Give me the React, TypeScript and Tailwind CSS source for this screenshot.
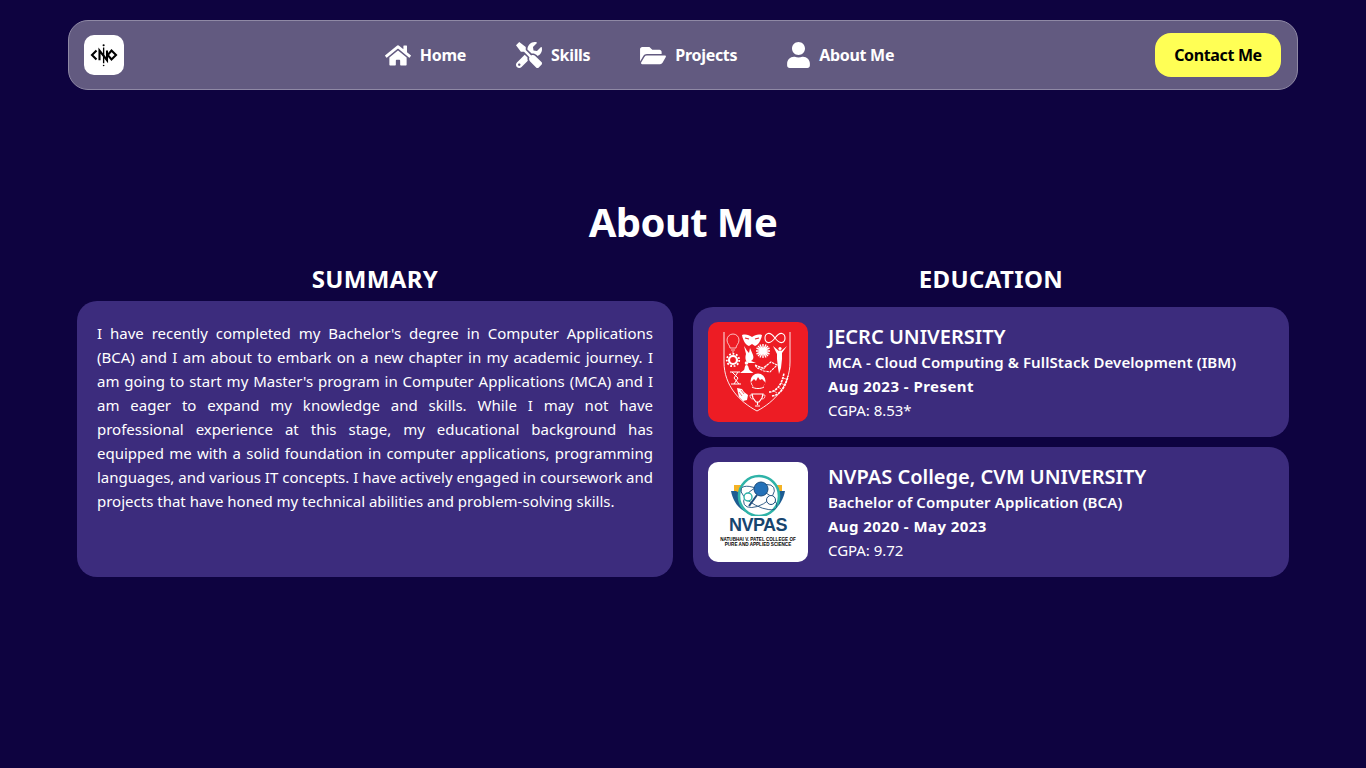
import React from "react";
import { FaFolderOpen, FaHome, FaTools, FaUser } from "react-icons/fa";

const navLinks = [
  { label: "Home", icon: FaHome, iconClass: "w-[26px] h-[23px]" },
  { label: "Skills", icon: FaTools, iconClass: "w-[26px] h-[26px]" },
  { label: "Projects", icon: FaFolderOpen, iconClass: "w-[26px] h-[23px]" },
  { label: "About Me", icon: FaUser, iconClass: "w-[23px] h-[26px]" },
];

const LogoMark = () => (
  <svg viewBox="0 0 40 40" className="w-[30px] h-[30px]">
    <g fill="none" stroke="#000" strokeWidth="2.8">
      <path d="M10 14l-6 6 6 6" />
      <path d="M14 27V14l10 13V14" />
      <path d="M30 14l6 6-6 6-5-6z" />
    </g>
    <circle cx="19.5" cy="7" r="1.4" fill="#000" />
    <path d="M19.5 10v21" stroke="#000" strokeWidth="1.8" />
    <circle cx="19.5" cy="34" r="1.1" fill="#000" />
  </svg>
);

const JecrcLogo = () => (
  <div className="w-[100px] h-[100px] shrink-0 rounded-[10px] bg-[#ed1c24]">
    <svg viewBox="0 0 100 100" className="w-full h-full" fill="none" stroke="#fff" strokeWidth="0.7">
      {/* shield */}
      <path d="M16 10v30c0 24 16 40 33 49 17-9 33-25 33-49V10" strokeWidth="0.9" />
      {/* bulb */}
      <path d="M22 26c0-3-3-4-3-8a6 6 0 0 1 12 0c0 4-3 5-3 8z" />
      <path d="M23 28h4M24 30h2" />
      {/* mask */}
      <path d="M34 13c4-1 7 0 10 2 3-2 6-3 10-2-1 6-4 10-7 11l-3-2-3 2c-3-1-6-5-7-11z" fill="#fff" stroke="none" />
      <path d="M37 16l4 1M47 17l4-1" stroke="#ed1c24" strokeWidth="1.2" />
      {/* infinity */}
      <path
        d="M67 16c-3-4-5-5-7-4.500-2 .5-3 2.500-3 4.500s1 4 3 4.500c2 .5 4-.5 7-4.500s5-5 7-4.500c2 .5 3 2.500 3 4.500s-1 4-3 4.500c-2 .5-4-.5-7-4.500z"
        strokeWidth="1.1"
      />
      {/* dove */}
      <path d="M36 24c2 3 3 5 5 7l1-5 3 7c1 3 0 5-2 6l5 2-7 0c-4-1-4-6-3-9z" fill="#fff" stroke="none" />
      {/* flower */}
      <g strokeWidth="1.4">
        <path d="M55 22v14M48 29h14M50 24l10 10M60 24L50 34M52 22.500l6 13M58 22.500l-6 13M48.500 26l13 6M61.500 26l-13 6" />
      </g>
      {/* gymnast */}
      <path d="M65 24l6 5 1-1 1 1 6-5-5 7v6l-1 9-2 6-1-6-1-9v-5z" fill="#fff" stroke="none" />
      <circle cx="72" cy="26.500" r="1.600" fill="#fff" stroke="none" />
      {/* gear */}
      <circle cx="25" cy="38" r="4" strokeWidth="2.200" />
      <circle cx="25" cy="38" r="6.200" strokeDasharray="1.800 1.700" strokeWidth="1.800" />
      {/* meditator */}
      <circle cx="38.500" cy="41" r="1.800" fill="#fff" stroke="none" />
      <path d="M38.500 43c2 0 2 3 3 5l4 3H32l4-3c1-2 .5-5 2.500-5z" fill="#fff" stroke="none" />
      {/* book */}
      <path d="M47 43l8 3 8-6 6 3-7 7-6-1-7-3z" strokeWidth="1.100" strokeDasharray="2.500 .8" />
      <path d="M50 45l6 2M59 43l-3 4" />
      {/* hourglass */}
      <path d="M22 50h10M23 62h10M24 50l6 6-4 6M30 50l-4 6 5 6" strokeWidth="1" />
      {/* globe */}
      <circle cx="50" cy="59" r="7.500" fill="#fff" stroke="none" />
      <path d="M43 60l3-3 2 2 2-4 2 3 2-1 3 3v2l-3 4h-8z" fill="#ed1c24" stroke="none" />
      <path d="M44 65c3 2 9 2 12 0" stroke="#fff" strokeWidth="1" />
      {/* dna */}
      <path d="M61 70c7 0 13-7 15-19M64 74c8-1 13-8 16-20" strokeWidth="1.600" strokeDasharray="2.500 .8" />
      <path d="M66 69l3 2M70 65l3 2M73 61l3 2M75 56l3 1" />
      {/* hand */}
      <path d="M29 66l5 1 2 3 4 3-1 5-4 1-4-4-1-4z" fill="#fff" stroke="none" />
      <path d="M31 70l3 4M33 68l3 4" stroke="#ed1c24" strokeWidth=".6" />
      {/* trophy */}
      <path d="M44 72h11l-1 4-3 4h-3l-3-4z" strokeWidth="1.200" />
      <path d="M44 73h-2c0 3 1 4 3 4M55 73h2c0 3-1 4-3 4" />
      <path d="M49.500 80v3M47 84h5" strokeWidth="1.200" />
    </svg>
  </div>
);

const NvpasLogo = () => (
  <div className="w-[100px] h-[100px] shrink-0 rounded-[10px] bg-white flex flex-col items-center">
    <svg viewBox="0 0 100 54" className="w-[100px] h-[54px] shrink-0">
      <path d="M26 23h7l-1 8-3 2-3-4z" fill="#f5b324" />
      <path d="M74 23h-7l1 8 3 2 3-4z" fill="#f5b324" />
      <path d="M23 29c2 10 7 18 17 22l-8-20-4-2z" fill="#1d5c92" />
      <path d="M77 29c-2 10-7 18-17 22l8-20 4-2z" fill="#1d5c92" />
      <circle cx="51" cy="34" r="20" fill="#fff" stroke="#2fb3a8" strokeWidth="2.600" />
      <ellipse cx="51" cy="36" rx="20" ry="8" transform="rotate(28 51 36)" fill="none" stroke="#1d4d7c" strokeWidth="0.8" />
      <ellipse cx="51" cy="34" rx="17" ry="9" transform="rotate(-30 51 34)" fill="none" stroke="#1d4d7c" strokeWidth="0.8" />
      <circle cx="53" cy="27" r="7" fill="#2471b8" stroke="#1d4d7c" />
      <circle cx="40" cy="35" r="4" fill="#fff" stroke="#2fb3a8" strokeWidth="1.400" />
      <circle cx="63" cy="38" r="4.500" fill="#fff" stroke="#1d4d7c" />
      <path d="M49 33l-8 11" stroke="#1d4d7c" strokeWidth="2" />
    </svg>
    <span className="text-[#17456f] text-[18px] leading-[18px] font-bold font-['Liberation_Sans',sans-serif] tracking-[-0.5px]">
      NVPAS
    </span>
    <span className="text-black text-[4.6px] leading-[5px] font-bold text-center font-['Liberation_Sans',sans-serif] mt-[3px] whitespace-nowrap">
      NATUBHAI V. PATEL COLLEGE OF
      <br />
      PURE AND APPLIED SCIENCE
    </span>
  </div>
);

const education = [
  {
    logo: <JecrcLogo />,
    name: "JECRC UNIVERSITY",
    course: "MCA - Cloud Computing & FullStack Development (IBM)",
    duration: "Aug 2023 - Present",
    grade: "CGPA: 8.53*",
  },
  {
    logo: <NvpasLogo />,
    name: "NVPAS College, CVM UNIVERSITY",
    course: "Bachelor of Computer Application (BCA)",
    duration: "Aug 2020 - May 2023",
    grade: "CGPA: 9.72",
  },
];

const App = () => {
  return (
    <div className="min-h-[768px] bg-[#0e0340] text-white font-['Noto_Sans',sans-serif] overflow-hidden">
      <div className="pt-5 px-[68px]">
        <nav className="h-[70px] flex items-center justify-between pl-[15px] pr-4 rounded-[20px] border border-[#8f89a5] bg-[#625a80]">
          <div className="w-10 h-10 rounded-[10px] bg-white flex items-center justify-center">
            <LogoMark />
          </div>
          <div className="flex items-center gap-[50px]">
            {navLinks.map((link) => {
              const Icon = link.icon;
              return (
                <div key={link.label} className="flex items-center gap-[9px] font-bold text-base tracking-[-0.3px]">
                  <Icon className={link.iconClass} />
                  {link.label}
                </div>
              );
            })}
          </div>
          <button
            type="button"
            className="w-[126px] h-11 rounded-2xl bg-[#ffff55] text-black font-bold text-base tracking-[-0.35px]"
          >
            Contact Me
          </button>
        </nav>
      </div>

      <h1 className="mt-[105px] text-center text-[40px] leading-[54px] font-bold tracking-[-0.6px]">About Me</h1>

      <div className="mt-[14px] mx-[77px] grid grid-cols-2 gap-5">
        <div className="flex flex-col">
          <h2 className="text-center text-2xl leading-[32px] font-bold tracking-[0.35px] h-[38px]">SUMMARY</h2>
          <div className="flex-1 rounded-[20px] bg-[#3c2c7d] px-5 py-5">
            <p className="text-justify text-[15px] leading-6">
              I have recently completed my Bachelor's degree in Computer Applications (BCA) and I am about to embark on a
              new chapter in my academic journey. I am going to start my Master's program in Computer Applications (MCA)
              and I am eager to expand my knowledge and skills. While I may not have professional experience at this
              stage, my educational background has equipped me with a solid foundation in computer applications,
              programming languages, and various IT concepts. I have actively engaged in coursework and projects that
              have honed my technical abilities and problem-solving skills.
            </p>
          </div>
        </div>
        <div className="flex flex-col">
          <h2 className="text-center text-2xl leading-[32px] font-bold tracking-[0.35px] h-[44px]">EDUCATION</h2>
          <div className="flex flex-col gap-2.5">
            {education.map((item) => (
              <div key={item.name} className="h-[130px] flex items-center gap-5 p-[15px] rounded-[20px] bg-[#3c2c7d]">
                {item.logo}
                <div className="flex flex-col">
                  <div className="text-xl leading-[30px] -mb-[2px] font-semibold">{item.name}</div>
                  <div className="text-[15px] leading-6 font-semibold tracking-[0.1px]">{item.course}</div>
                  <div className="text-[15px] leading-6 font-bold tracking-[0.45px]">{item.duration}</div>
                  <div className="text-[15px] leading-6 tracking-[-0.05px]">{item.grade}</div>
                </div>
              </div>
            ))}
          </div>
        </div>
      </div>
    </div>
  );
};

export default App;
